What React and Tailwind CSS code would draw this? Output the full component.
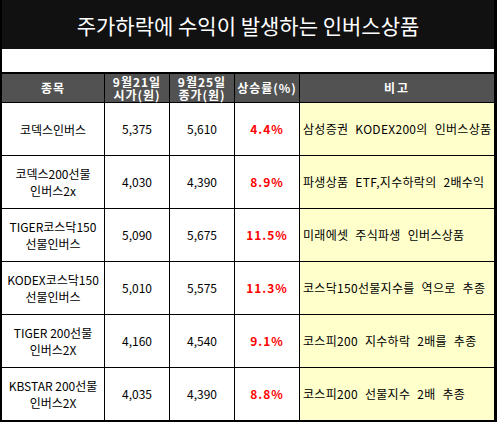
const rows = [
  { name: ["코덱스인버스"], open: "5,375", close: "5,610", rate: "4.4%", note: "삼성증권 KODEX200의 인버스상품" },
  { name: ["코덱스200선물", "인버스2x"], open: "4,030", close: "4,390", rate: "8.9%", note: "파생상품 ETF,지수하락의 2배수익" },
  { name: ["TIGER코스닥150", "선물인버스"], open: "5,090", close: "5,675", rate: "11.5%", note: "미래에셋 주식파생 인버스상품" },
  { name: ["KODEX코스닥150", "선물인버스"], open: "5,010", close: "5,575", rate: "11.3%", note: "코스닥150선물지수를 역으로 추종" },
  { name: ["TIGER 200선물", "인버스2X"], open: "4,160", close: "4,540", rate: "9.1%", note: "코스피200 지수하락 2배를 추종" },
  { name: ["KBSTAR 200선물", "인버스2X"], open: "4,035", close: "4,390", rate: "8.8%", note: "코스피200 선물지수 2배 추종" },
];

const font = { fontFamily: '"Noto Sans CJK KR", "Noto Sans", sans-serif' };

export default function App() {
  return (
    <div className="w-[497px] h-[423px] bg-white" style={font}>
      <div className="border-l-2 border-r-[3px] border-b-2 border-black">
        <div className="h-[49px] bg-[#111111] flex items-center justify-center text-white text-[21px] leading-none pt-px">
          주가하락에 수익이 발생하는 인버스상품
        </div>
        <div className="h-[23px] bg-white" />
        <div className="h-[2px] bg-black" />
        <div className="grid grid-cols-[102px_64px_64px_64px_194px] grid-rows-[28px_repeat(6,52px)] gap-px bg-black text-[12px]">
          <div className="bg-[#525252] text-white font-bold flex items-center justify-center tracking-[1px]">
            종목
          </div>
          <div className="bg-[#525252] text-white font-bold flex flex-col items-center justify-center leading-[13px] tracking-[1px]">
            <span>9월21일</span>
            <span>시가(원)</span>
          </div>
          <div className="bg-[#525252] text-white font-bold flex flex-col items-center justify-center leading-[13px] tracking-[1px]">
            <span>9월25일</span>
            <span>종가(원)</span>
          </div>
          <div className="bg-[#525252] text-white font-bold flex items-center justify-center tracking-[1px]">
            상승률(%)
          </div>
          <div className="bg-[#525252] text-white font-bold flex items-center justify-center tracking-[2px]">
            비고
          </div>

          {rows.map((r) => (
            <div key={r.note} className="contents">
              <div className="bg-white flex flex-col items-center justify-center leading-[17px] text-black">
                {r.name.map((n) => (
                  <span key={n}>{n}</span>
                ))}
              </div>
              <div className="bg-white flex items-center justify-center text-black">{r.open}</div>
              <div className="bg-white flex items-center justify-center text-black">{r.close}</div>
              <div className="bg-white flex items-center justify-center text-[#ff0000] font-bold tracking-[1px]">
                {r.rate}
              </div>
              <div className="bg-[#ffffcc] flex items-center pl-[3px] text-black whitespace-nowrap [word-spacing:4px] tracking-[0.3px]">
                {r.note}
              </div>
            </div>
          ))}
        </div>
      </div>
    </div>
  );
}
